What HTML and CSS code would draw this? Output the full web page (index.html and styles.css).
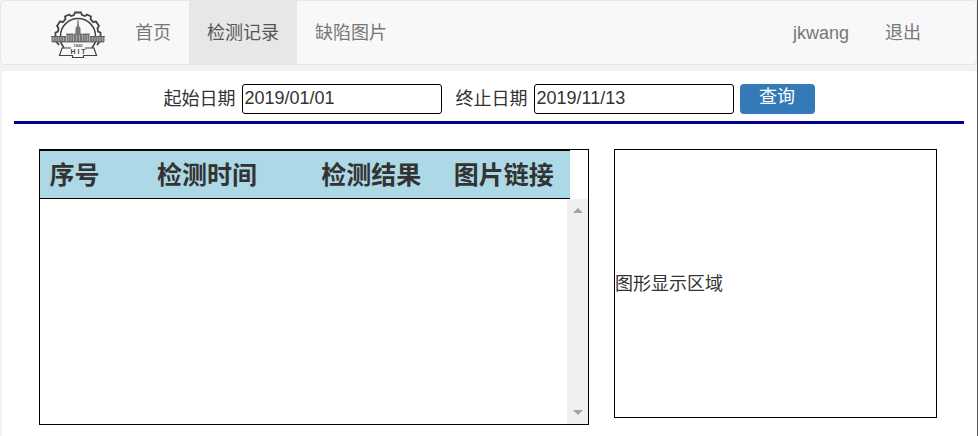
FILE: index.html
```html
<!DOCTYPE html>
<html lang="zh-CN">
<head>
<meta charset="utf-8">
<title>检测记录</title>
<link rel="stylesheet" href="styles.css">
</head>
<body>
<nav class="navbar">
  <a class="brand" href="#" aria-label="HIT">
    <svg class="logo" viewBox="0 0 54 48" width="54" height="48" aria-hidden="true">
      <g fill="none" stroke="#444">
        <path stroke-width="1.800" d="M8 34 L5.500 31 M4.500 25 V21.500 L7 20.500 L7.500 17 L6 15 L9 10.500 L12 11 L14.500 8 L14 5.500 L18 3.500 L20 5 L23 4 L24 1.500 H30 L31 4 L34 5 L36 3.500 L40 5.500 L39.500 8 L42 11 L45 10.500 L48 15 L46.500 17 L47 20.500 L49.500 21.500 V25 M46 34 L48.500 31"/>
        <path stroke-width="1.500" d="M9.500 25 A17.500 17.500 0 0 1 44.500 25 M9.500 31 L13 37 M44.500 31 L41 37"/>
        <path stroke-width="1.200" d="M20 37 H11 L8.500 44.500 H21.500 V46.500 H32.500 V44.500 H45.500 L43 37 H34"/>
      </g>
      <g fill="#777">
        <path d="M26.500 9 H27.500 L28 15 L29.500 17 V22 L31.500 23 V31 H22.500 V23 L24.500 22 V17 L26 15 Z"/>
        <path d="M15.500 23 H38.500 V31 H15.500 Z M0.500 25 H15 V31 H0.500 Z M39 25 H53.500 V31 H39 Z"/>
      </g>
      <path stroke="#bbb" stroke-width="0.700" d="M2.500 26 V30 M5 26 V30 M7.500 26 V30 M10 26 V30 M12.500 26 V30 M17.500 24 V30 M20 24 V30 M22.500 24 V30 M25.500 24 V30 M28.500 24 V30 M31.500 24 V30 M34 24 V30 M36.500 24 V30 M41.500 26 V30 M44 26 V30 M46.500 26 V30 M49 26 V30 M51.500 26 V30"/>
      <path stroke="#555" stroke-width="0.800" d="M0 25.500 H15 M39 25.500 H54 M15 23 H22 M32 23 H39 M1 31 H53"/>
      <text class="logo-year" x="27" y="36">1920</text>
      <text class="logo-name" x="27" y="42.500">H I T</text>
    </svg>
  </a>
  <a class="nav-link" href="#">首页</a>
  <a class="nav-link active" href="#" aria-current="page">检测记录</a>
  <a class="nav-link" href="#">缺陷图片</a>
  <span class="spacer"></span>
  <a class="nav-link" href="#">jkwang</a>
  <a class="nav-link" href="#">退出</a>
</nav>
<main class="page">
  <form class="filter">
    <label for="start">起始日期</label>
    <input id="start" class="date" type="text" value="2019/01/01">
    <label class="end-label" for="end">终止日期</label>
    <input id="end" class="date" type="text" value="2019/11/13">
    <button class="query" type="button">查询</button>
  </form>
  <div class="content">
    <section class="records">
      <table class="head">
        <thead>
          <tr><th class="col-no">序号</th><th class="col-time">检测时间</th><th class="col-result">检测结果</th><th class="col-link">图片链接</th></tr>
        </thead>
      </table>
      <div class="rows">
        <div class="track">
          <svg width="10" height="5" viewBox="0 0 10 5" aria-hidden="true"><path fill="#a3a3a3" d="M0 5 L5 0 L10 5 Z"/></svg>
          <svg width="10" height="5" viewBox="0 0 10 5" aria-hidden="true"><path fill="#a3a3a3" d="M0 0 H10 L5 5 Z"/></svg>
        </div>
      </div>
    </section>
    <section class="display">图形显示区域</section>
  </div>
</main>
</body>
</html>
```
FILE: styles.css
```css
* { box-sizing: border-box; }

body {
  display: flex;
  flex-direction: column;
  min-height: 100vh;
  margin: 0;
  border-right: 1px solid #55585a;
  background: #f2f2f2;
  color: #333;
  font: 400 18px/26px "Liberation Sans", "Noto Sans CJK SC", sans-serif;
}

.navbar {
  display: flex;
  height: 65px;
  padding: 0 37px 0 50px;
  border: 1px solid #e7e7e7;
  border-radius: 5px;
  background: #f8f8f8;
}

.brand {
  display: flex;
  align-items: center;
  width: 66px;
  padding-top: 4px;
}

.logo-year,
.logo-name {
  fill: #444;
  font-family: "Liberation Sans", sans-serif;
  font-weight: 700;
  text-anchor: middle;
}

.logo-year { font-size: 4px; }
.logo-name { font-size: 7px; }

.nav-link {
  display: flex;
  align-items: center;
  padding: 0 18px;
  color: #777;
  text-decoration: none;
}

.nav-link.active {
  background: #e7e7e7;
  color: #555;
}

.spacer { flex: 1; }

.page {
  flex: 1;
  margin: 6px 0 0 2px;
  padding: 13px 13px 11px 12px;
  background: #fff;
}

.filter {
  display: flex;
  justify-content: center;
  align-items: center;
  gap: 6px;
  padding-bottom: 7px;
  border-bottom: 3px solid #00008b;
}

.end-label { margin-left: 8px; }

.date {
  width: 200px;
  height: 30px;
  padding: 0 2px 2px;
  border: 1px solid #000;
  border-radius: 3px;
  background: #fff;
  color: #333;
  font: inherit;
}

.query {
  width: 75px;
  height: 30px;
  padding: 0 0 4px;
  border: 0;
  border-radius: 4px;
  background: #337ab7;
  color: #fff;
  font: inherit;
}

.content {
  display: grid;
  grid-template-columns: 550fr 323fr;
  gap: 25px;
  align-items: start;
  padding: 25px 27px 0 25px;
}

.records { border: 1px solid #000; }

.head {
  width: calc(100% - 18px);
  border-collapse: collapse;
  table-layout: fixed;
  border-top: 1px solid #000;
  border-bottom: 1px solid #000;
  background: lightblue;
}

.head th {
  height: 48px;
  padding: 0;
  font-size: 25px;
  font-weight: 700;
  line-height: 30px;
}

.col-no { width: 13%; }
.col-time { width: 37%; }
.col-result { width: 25%; }
.col-link { width: 25%; }

.rows {
  display: flex;
  justify-content: flex-end;
  height: 225px;
}

.track {
  display: flex;
  flex-direction: column;
  justify-content: space-between;
  align-items: center;
  width: 21px;
  padding: 9px 0;
  background: #f0f0f0;
}

.display {
  display: flex;
  align-items: center;
  height: 269px;
  border: 1px solid #000;
}
```
